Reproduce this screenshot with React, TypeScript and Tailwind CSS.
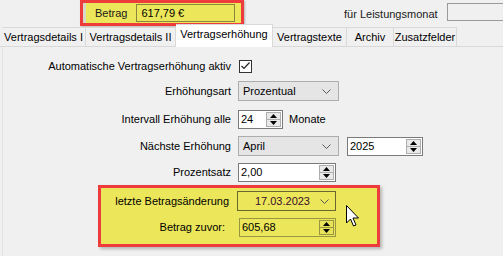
import React from "react";

function Chevron() {
  return (
    <svg width="9" height="5" viewBox="0 0 9 5" className="block">
      <polyline points="0.5,0.5 4.5,4.5 8.5,0.5" fill="none" stroke="#5a5a5a" strokeWidth="1" />
    </svg>
  );
}

function Spin({ yellow = false }: { yellow?: boolean }) {
  const btn = yellow
    ? "bg-[#e8e35a] border-[#9a9640]"
    : "bg-[#e9e9e9] border-[#adadad]";
  return (
    <div className="flex flex-col w-[15px] h-full shrink-0">
      <div className={`flex-1 flex items-center justify-center border ${btn}`}>
        <svg width="7" height="4" viewBox="0 0 7 4" className="block">
          <polygon points="3.5,0 7,4 0,4" fill="#000" />
        </svg>
      </div>
      <div className={`flex-1 flex items-center justify-center border border-t-0 ${btn}`}>
        <svg width="7" height="4" viewBox="0 0 7 4" className="block">
          <polygon points="0,0 7,0 3.5,4" fill="#000" />
        </svg>
      </div>
    </div>
  );
}

function Combo({ text, w }: { text: string; w: string }) {
  return (
    <div className={`${w} h-[20px] border border-[#adadad] bg-[#e5e5e5] flex items-center pl-[4px] pr-[7px]`}>
      <span className="flex-1">{text}</span>
      <Chevron />
    </div>
  );
}

function Num({ text, w, h = "h-[19px]" }: { text: string; w: string; h?: string }) {
  return (
    <div className={`${w} ${h} border border-[#7a7a7a] bg-white flex items-stretch p-[1px]`}>
      <span className="flex-1 pl-[1px] leading-[15px]">{text}</span>
      <Spin />
    </div>
  );
}

const tab = "h-[19px] border border-l-0 border-b-0 border-[#d9d9d9] bg-[#f0f0f0] flex items-center justify-center whitespace-nowrap";

export default function App() {
  return (
    <div className="w-[503px] h-[256px] bg-[#f0f0f0] overflow-hidden font-['Liberation_Sans',Arial,sans-serif] text-[11px] text-black leading-none relative">
      {/* top bar */}
      <div className="h-[27px] flex items-start relative whitespace-nowrap">
        <div className="shrink-0 ml-[80px] w-[164px] h-[26px] border-[3px] border-[#ee3b3b] bg-[#ebe65a] flex items-center shadow-[1px_1px_2px_rgba(0,0,0,0.25)]">
          <div className="w-[3px] h-full bg-[#d8d8c8]" />
          <span className="ml-[9px] text-[#1a1a1a]">Betrag</span>
          <div className="ml-[9px] w-[99px] h-[18px] border border-[#8a8640] flex items-center pl-[4px]">
            617,79 €
          </div>
        </div>
        <span className="shrink-0 ml-[100px] mt-[9px] text-[#1a1a1a]">für Leistungsmonat</span>
        <div className="shrink-0 ml-[9px] mt-[3px] w-[60px] h-[18px] border border-[#9a9a9a] bg-[#f0f0f0]" />
      </div>

      {/* tabs */}
      <div className="flex items-end h-[20px] pl-[2px] border-b border-[#d9d9d9] relative">
        <div className={`${tab} border-l w-[84px]`}>Vertragsdetails I</div>
        <div className={`${tab} w-[90px]`}>Vertragsdetails II</div>
        <div className="w-[97px] h-[23px] -mb-[1px] border border-l-0 border-b-0 border-[#d9d9d9] bg-white flex items-center justify-center pb-[3px] whitespace-nowrap">Vertragserhöhung</div>
        <div className={`${tab} w-[74px]`}>Vertragstexte</div>
        <div className={`${tab} w-[47px]`}>Archiv</div>
        <div className={`${tab} w-[63px]`}>Zusatzfelder</div>
      </div>

      {/* panel */}
      <div className="ml-[2px] h-[210px] border-l border-[#e3e3e3] bg-[#f0f0f0] pt-[9px] flex flex-col">
        <div className="flex items-center h-[20px]">
          <div className="w-[228px] text-right">Automatische Vertragserhöhung aktiv</div>
          <div className="ml-[8px] w-[13px] h-[13px] border border-[#333] bg-white flex items-center justify-center">
            <svg width="9" height="8" viewBox="0 0 9 8" className="block">
              <polyline points="0.5,4 3,6.5 8.5,0.5" fill="none" stroke="#222" strokeWidth="1.2" />
            </svg>
          </div>
        </div>

        <div className="flex items-center h-[20px] mt-[5px]">
          <div className="w-[228px] text-right">Erhöhungsart</div>
          <div className="ml-[7px]"><Combo text="Prozentual" w="w-[101px]" /></div>
        </div>

        <div className="flex items-center h-[20px] mt-[8px]">
          <div className="w-[228px] text-right">Intervall Erhöhung alle</div>
          <div className="ml-[7px]"><Num text="24" w="w-[45px]" /></div>
          <span className="ml-[6px]">Monate</span>
        </div>

        <div className="flex items-center h-[20px] mt-[7px]">
          <div className="w-[228px] text-right">Nächste Erhöhung</div>
          <div className="ml-[7px]"><Combo text="April" w="w-[101px]" /></div>
          <div className="ml-[8px]"><Num text="2025" w="w-[76px]" /></div>
        </div>

        <div className="flex items-center h-[20px] mt-[6px]">
          <div className="w-[228px] text-right">Prozentsatz</div>
          <div className="ml-[7px]"><Num text="2,00" w="w-[98px]" /></div>
        </div>

        {/* highlighted box */}
        <div className="relative ml-[95px] mt-[3px] w-[282px] h-[62px] border-[3px] border-[#ee3b3b] bg-[#ebe65a] pt-[3px] shadow-[2px_2px_3px_rgba(0,0,0,0.25)]">
          <div className="flex items-center h-[20px]">
            <div className="w-[128px] text-right">letzte Betragsänderung</div>
            <div className="ml-[8px] w-[99px] h-[20px] border border-[#6a6630] flex items-center pr-[6px]">
              <span className="flex-1 text-right pr-[10px] text-[#3a0d2a]">17.03.2023</span>
              <Chevron />
            </div>
          </div>
          <div className="flex items-center h-[20px] mt-[6px]">
            <div className="w-[124px] text-right">Betrag zuvor:</div>
            <div className="ml-[14px] w-[97px] h-[19px] border border-[#9a9640] flex items-stretch p-[1px]">
              <span className="flex-1 pl-[1px] leading-[15px]">605,68</span>
              <Spin yellow />
            </div>
          </div>
          {/* mouse cursor */}
          <svg className="absolute left-[245px] top-[17px]" width="14" height="23" viewBox="0 0 14 23">
            <path d="M0.5,0.5 L0.5,18 L4.5,14 L7.5,21 L10,20 L7,13 L12.5,13 Z" fill="#fff" stroke="#000" strokeWidth="1" strokeLinejoin="miter" />
          </svg>
        </div>
      </div>
    </div>
  );
}
